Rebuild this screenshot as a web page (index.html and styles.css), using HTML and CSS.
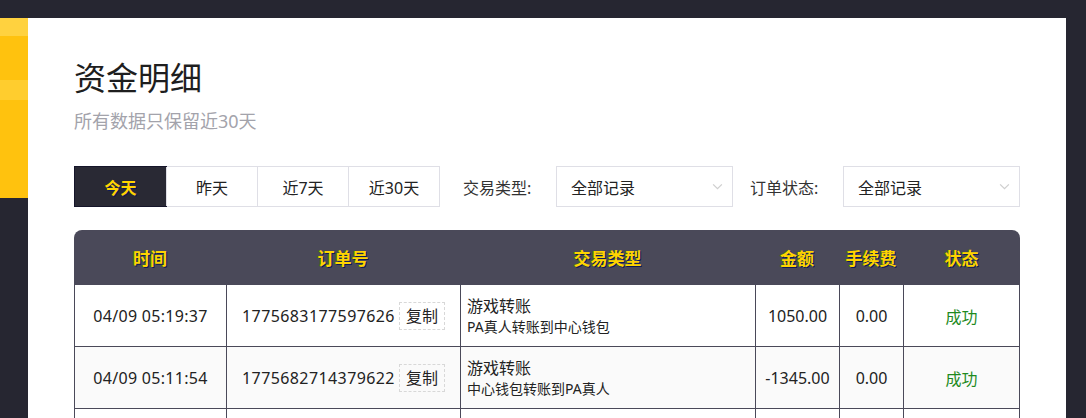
FILE: index.html
```html
<!DOCTYPE html>
<html lang="zh-CN">
<head>
<meta charset="utf-8">
<title>资金明细</title>
<link rel="stylesheet" href="styles.css">
</head>
<body>
<div class="shell">
  <aside class="side">
    <div class="side-banner"></div>
  </aside>
  <main class="panel">
    <h1 class="title">资金明细</h1>
    <p class="subtitle">所有数据只保留近30天</p>

    <div class="filters">
      <div class="range">
        <button class="range-btn active">今天</button>
        <button class="range-btn">昨天</button>
        <button class="range-btn">近7天</button>
        <button class="range-btn">近30天</button>
      </div>
      <label class="filter-label first">交易类型:</label>
      <div class="select">
        <span>全部记录</span>
        <svg class="chev" viewBox="0 0 12 8" width="11" height="7"><path d="M1 1.5 L6 6.5 L11 1.5" fill="none" stroke="#cfcfcf" stroke-width="1.4"/></svg>
      </div>
      <label class="filter-label">订单状态:</label>
      <div class="select">
        <span>全部记录</span>
        <svg class="chev" viewBox="0 0 12 8" width="11" height="7"><path d="M1 1.5 L6 6.5 L11 1.5" fill="none" stroke="#cfcfcf" stroke-width="1.4"/></svg>
      </div>
    </div>

    <table class="records">
      <thead>
        <tr>
          <th class="c-time">时间</th>
          <th class="c-order">订单号</th>
          <th class="c-type">交易类型</th>
          <th class="c-amount">金额</th>
          <th class="c-fee">手续费</th>
          <th class="c-status">状态</th>
        </tr>
      </thead>
      <tbody>
        <tr>
          <td class="time">04/09 05:19:37</td>
          <td><span class="order-no">1775683177597626</span><span class="copy">复制</span></td>
          <td class="type"><div class="type-main">游戏转账</div><div class="type-sub">PA真人转账到中心钱包</div></td>
          <td>1050.00</td>
          <td>0.00</td>
          <td class="ok">成功</td>
        </tr>
        <tr>
          <td class="time">04/09 05:11:54</td>
          <td><span class="order-no">1775682714379622</span><span class="copy">复制</span></td>
          <td class="type"><div class="type-main">游戏转账</div><div class="type-sub">中心钱包转账到PA真人</div></td>
          <td>-1345.00</td>
          <td>0.00</td>
          <td class="ok">成功</td>
        </tr>
        <tr class="tail">
          <td></td>
          <td></td>
          <td class="type"></td>
          <td></td>
          <td></td>
          <td></td>
        </tr>
      </tbody>
    </table>
  </main>
  <div class="edge"></div>
</div>
</body>
</html>
```

FILE: styles.css
```css
* { box-sizing: border-box; }

html, body {
  margin: 0;
  height: 100%;
  overflow: hidden;
}

body {
  background: #262631;
  font-family: "Noto Sans", "Noto Sans CJK SC", sans-serif;
  color: #222;
}

.shell {
  display: flex;
  padding-top: 18px;
  min-height: 100%;
}

.side {
  width: 28px;
  flex: none;
}

/* yellow promo strip peeking out from behind the panel */
.side-banner {
  height: 180px;
  background:
    linear-gradient(#ffd23f 0, #ffd23f 18px, transparent 18px, transparent 62px, #ffcd2e 62px, #ffcd2e 82px, transparent 82px),
    #ffc20e;
}

.panel {
  flex: 1;
  background: #fff;
  padding: 36px 46px 0 46px;
  min-height: 420px;
}

.edge {
  width: 20px;
  flex: none;
}

.title {
  margin: 0;
  font-family: "Noto Sans CJK SC", sans-serif;
  font-size: 32px;
  font-weight: 400;
  line-height: 44px;
  color: #1e1e1e;
}

.subtitle {
  margin: 10px 0 0;
  font-size: 18px;
  line-height: 26px;
  color: #a3a3ab;
}

.filters {
  display: flex;
  align-items: center;
  margin-top: 32px;
  height: 41px;
}

.range {
  display: flex;
  border: 1px solid #dfdfe6;
}

.range-btn {
  width: 91px;
  height: 39px;
  border: 0;
  border-left: 1px solid #dfdfe6;
  background: #fff;
  font-family: inherit;
  font-size: 16px;
  color: #222;
  padding: 0;
}

.range-btn:first-child { border-left: 0; }

.range-btn.active {
  background: #292934;
  color: #ffd400;
  font-weight: 700;
  text-shadow: 1px 1px 0 #0d1a55;
  outline: 1px solid #15152a;
}

.filter-label {
  width: 93px;
  flex: none;
  font-size: 16px;
  color: #333;
  margin-left: 17px;
}

.filter-label.first { margin-left: 23px; }

.select {
  width: 177px;
  height: 41px;
  border: 1px solid #dfdfe6;
  display: flex;
  align-items: center;
  justify-content: space-between;
  padding: 0 9px 0 14px;
  font-size: 16px;
  color: #222;
}

.records {
  margin-top: 23px;
  width: 946px;
  border-collapse: separate;
  border-spacing: 0;
  table-layout: fixed;
}

.records th {
  background: #4a4959;
  color: #ffd400;
  font-size: 17px;
  font-weight: 700;
  height: 55px;
  text-shadow: 1px 1px 0 #0d1a55, -1px 0 0 #3a6b2a;
  padding: 0;
}

.records th:first-child { border-top-left-radius: 8px; }
.records th:last-child { border-top-right-radius: 8px; }

.c-time { width: 152px; }
.c-order { width: 234px; }
.c-type { width: 295px; }
.c-amount { width: 84px; }
.c-fee { width: 64px; }
.c-status { width: 117px; }

.records td {
  height: 62px;
  text-align: center;
  font-size: 16px;
  color: #222;
  border-left: 1px solid #4a4959;
  border-bottom: 1px solid #4a4959;
  padding: 0;
  white-space: nowrap;
}

.records td:last-child { border-right: 1px solid #4a4959; }

.records tbody tr:nth-child(even) td { background: #fafafa; }

.records td.time { letter-spacing: 0.3px; }

.order-no {
  vertical-align: middle;
  letter-spacing: 0.4px;
}

.copy {
  display: inline-block;
  vertical-align: middle;
  margin-left: 4px;
  padding: 0 6px;
  height: 28px;
  line-height: 26px;
  border: 1px dashed #d8d8d8;
  font-size: 16px;
}

.records td.type {
  text-align: left;
  padding-left: 6px;
}

.type-main {
  font-size: 16px;
  line-height: 22px;
}

.type-sub {
  font-size: 14px;
  line-height: 20px;
}

.records td.ok { color: #1e8a1e; }
```
